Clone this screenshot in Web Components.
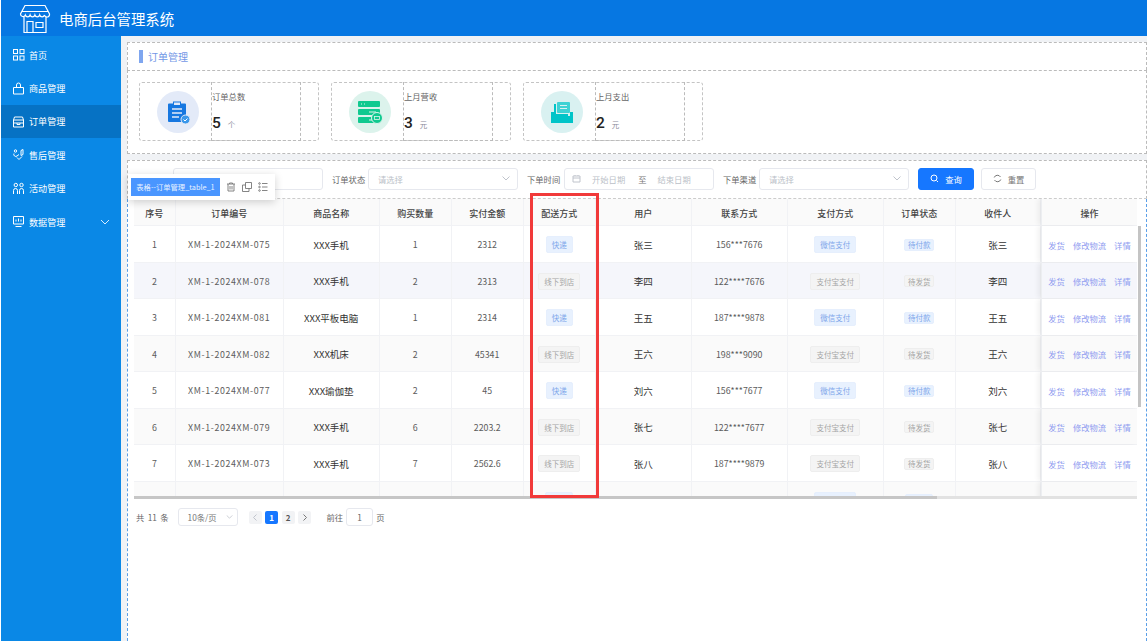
<!DOCTYPE html>
<html lang="zh">
<head>
<meta charset="utf-8">
<title>电商后台管理系统</title>
<style>
  html, body { margin: 0; height: 100%; background: #fff; overflow: hidden; }
  body { padding-left: 1px; box-sizing: border-box; font-family: "Noto Sans CJK SC", "Noto Sans", sans-serif; color: #555; }
</style>
</head>
<body>
<app-shell>
  <side-menu slot="side"></side-menu>
  <title-panel>订单管理</title-panel>
  <stats-panel>
    <stat-card label="订单总数" value="5" unit="个" bg="#e3eaf8">
      <svg slot="icon" width="26" height="26" viewBox="0 0 26 26">
        <path d="M4 4.500h4v-2h8v2h4a1 1 0 0 1 1 1V22a1 1 0 0 1-1 1H4a1 1 0 0 1-1-1V5.500a1 1 0 0 1 1-1z" fill="#1677e0"/>
        <path d="M9 3.500h6v2.500H9z" fill="#e3eaf8"/>
        <path d="M7 10h10M7 14h10M7 18h7" stroke="#e3eaf8" stroke-width="1.500"/>
        <circle cx="20.500" cy="20.500" r="4.500" fill="#3a97ea" stroke="#e3eaf8"/>
        <path d="M18.500 20.500l1.500 1.500 2.500-2.500" stroke="#fff" fill="none"/>
      </svg>
    </stat-card>
    <stat-card label="上月营收" value="3" unit="元" bg="#dcf3ec">
      <svg slot="icon" width="26" height="26" viewBox="0 0 26 26">
        <rect x="1" y="2" width="22" height="6" rx="1" fill="#10c98f"/>
        <rect x="1" y="10" width="22" height="6" rx="1" fill="#10c98f"/>
        <rect x="1" y="18" width="22" height="6" rx="1" fill="#10c98f"/>
        <path d="M4 5h1M7 5h1M12 13h7M12 21h5" stroke="#dcf3ec"/>
        <circle cx="20" cy="19" r="5.500" fill="#10c98f" stroke="#dcf3ec"/>
        <rect x="17.500" y="17.500" width="5" height="3" fill="none" stroke="#dcf3ec" stroke-width=".8"/>
      </svg>
    </stat-card>
    <stat-card label="上月支出" value="2" unit="元" bg="#d9f1f1">
      <svg slot="icon" width="26" height="26" viewBox="0 0 26 26">
        <path d="M2 13h3V5h2v10h12v2H2zM2 17h22v7H2z" fill="#00c4c8"/>
        <path d="M21 13h3v5h-3z" fill="#00c4c8"/>
        <rect x="8" y="3" width="13" height="11" rx="1" fill="#3ed2d4"/>
        <path d="M11 6.500h7M11 9.500h7" stroke="#d9f1f1" stroke-width="1.200"/>
      </svg>
    </stat-card>
  </stats-panel>
  <order-section></order-section>
</app-shell>

<script>
const ICONS = {
  grid: '<rect x="1.500" y="1.500" width="4" height="4"/><rect x="8" y="1.500" width="4" height="4"/><rect x="1.500" y="8" width="4" height="4"/><rect x="8" y="8" width="4" height="4"/>',
  bag: '<path d="M1.500 5.500h10v6.500h-10zM4.500 5.500V3a2 2 0 0 1 4 0v2.500"/>',
  store: '<path d="M2.500 2h8l1 3h-10zM1.500 5V12h10V5M1.500 8h10M5 8v1.500h3V8"/>',
  hands: '<path d="M2 5.500a2 2 0 0 0 3 2.500l2-1.500M5 9.500l2 2 3-3M9 2.500l2-1v5l-2 1z"/><circle cx="3.500" cy="3" r="1.200"/>',
  people: '<circle cx="3.800" cy="3" r="1.700"/><circle cx="9.500" cy="3" r="1.700"/><path d="M1.500 12V8.500a2 2 0 0 1 4 0V12M7.500 12V8.500a2 2 0 0 1 4 0V12"/>',
  monitor: '<path d="M1.500 1.500h10v7.500h-10zM3.500 11.500h6M4 6.500V4.500M6.500 6.500V3.500M9 6.500V4.500"/>'
};

class AppShell extends HTMLElement {
  constructor() {
    super();
    this.attachShadow({ mode: "open" }).innerHTML = `
      <style>
        :host { display: flex; flex-direction: column; height: 641px; }
        header { flex: none; height: 36px; background: #0677e2; display: flex; align-items: center; gap: 8px; padding-left: 18px; color: #fff; font-size: 14.400px; }
        .body { flex: 1; display: flex; min-height: 0; }
        main { flex: 1; min-width: 0; background: #f0f2f5; padding: 6px 0 0 6px; display: flex; flex-direction: column; }
      </style>
      <header>
        <svg width="32" height="32" viewBox="0 0 32 32" fill="none" stroke="#fff" stroke-width="1.200">
          <path d="M6 3.500h20l4.500 8.500a2.500 2.500 0 0 1-5 1 2.500 2.500 0 0 1-4.800 0 2.500 2.500 0 0 1-4.800 0 2.500 2.500 0 0 1-4.800 0 2.500 2.500 0 0 1-4.800 0 2.500 2.500 0 0 1-4.800-1z"/>
          <path d="M3 9.500h26M5 15v15.500h22V15"/>
          <path d="M8 30.500V19.500h6v11M17 20.500h7v5h-7z"/>
        </svg>
        <span>电商后台管理系统</span>
      </header>
      <div class="body">
        <slot name="side"></slot>
        <main><slot></slot></main>
      </div>`;
  }
}

class SideMenu extends HTMLElement {
  constructor() {
    super();
    const items = [["grid", "首页"], ["bag", "商品管理"], ["store", "订单管理", 1], ["hands", "售后管理"], ["people", "活动管理"], ["monitor", "数据管理", 0, 1]];
    this.attachShadow({ mode: "open" }).innerHTML = `
      <style>
        :host { display: block; flex: none; width: 120px; background: #0a88e6; padding-top: 2px; color: #fff; font-size: 9.100px; }
        .item { height: 33.400px; display: flex; align-items: center; gap: 4px; padding-left: 11px; box-sizing: border-box; }
        .on { background: #0672c4; }
        svg.i { width: 13px; height: 13px; fill: none; stroke: #fff; stroke-width: 1; flex: none; }
        .arrow { margin-left: auto; margin-right: 11px; width: 10px; height: 6px; fill: none; stroke: #d6ecff; stroke-width: 1; }
      </style>
      ${items.map(([ic, t, on, more]) => `
        <div class="item ${on ? "on" : ""}">
          <svg class="i" viewBox="0 0 13 13">${ICONS[ic]}</svg><span>${t}</span>
          ${more ? '<svg class="arrow" viewBox="0 0 10 6"><path d="M1 1l4 4 4-4"/></svg>' : ""}
        </div>`).join("")}`;
  }
}

class TitlePanel extends HTMLElement {
  constructor() {
    super();
    this.attachShadow({ mode: "open" }).innerHTML = `
      <style>
        :host { display: flex; flex: none; align-items: center; height: 28px; box-sizing: border-box; background: #fff; border: 1px dashed #bbb; border-bottom: 0; padding: 0 0 1px 11px; color: #7397e6; font-size: 10px; }
        i { width: 4px; height: 13px; background: #7fa6ef; margin-right: 5px; }
      </style>
      <i></i><slot></slot>`;
  }
}

class StatsPanel extends HTMLElement {
  constructor() {
    super();
    this.attachShadow({ mode: "open" }).innerHTML = `
      <style>
        :host { display: flex; flex: none; gap: 12px; height: 84px; box-sizing: border-box; background: #fff; border: 1px dashed #bbb; padding: 11px 0 0 11px; margin-bottom: 6px; }
      </style>
      <slot></slot>`;
  }
}

class StatCard extends HTMLElement {
  constructor() {
    super();
    const a = n => this.getAttribute(n);
    this.attachShadow({ mode: "open" }).innerHTML = `
      <style>
        :host { display: flex; box-sizing: border-box; width: 180px; height: 59px; border: 1px dashed #c4c4c4; border-radius: 3px; padding-left: 17px; }
        .circle { flex: none; width: 42px; height: 42px; align-self: center; border-radius: 50%; background: ${a("bg")}; display: flex; align-items: center; justify-content: center; margin-right: 12px; }
        .box { flex: none; width: 90px; box-sizing: border-box; border: 1px dashed #bbb; border-width: 0 1px 1px 1px; margin-top: -1px; margin-bottom: -1px; padding-top: 8px; }
        .label { font-size: 8.300px; line-height: 12px; color: #666; height: 17px; }
        .val { display: flex; align-items: baseline; gap: 7px; margin-top: 6px; }
        b { font: 500 15.500px/20px Roboto, sans-serif; color: #222; }
        small { font-size: 7.500px; color: #8a8a9a; }
      </style>
      <div class="circle"><slot name="icon"></slot></div>
      <div class="box">
        <div class="label">${a("label")}</div>
        <div class="val"><b>${a("value")}</b><small>${a("unit")}</small></div>
      </div>`;
  }
}

class FilterBar extends HTMLElement {
  constructor() {
    super();
    const chev = '<svg width="8" height="5" viewBox="0 0 8 5" fill="none" stroke="#c0c4cc"><path d="M.5.5L4 4 7.500.5"/></svg>';
    const select = ph => `<div class="ctl"><span class="ph">${ph}</span>${chev}</div>`;
    this.attachShadow({ mode: "open" }).innerHTML = `
      <style>
        :host { display: flex; flex: none; align-items: center; height: 39px; box-sizing: border-box; background: #fff; border: 1px dashed #bbb; border-bottom-color: #ccc; padding: 0 0 2px 45px; font-size: 8.300px; color: #666; }
        .ctl { width: 150px; height: 22px; box-sizing: border-box; border: 1px solid #e6e8ee; border-radius: 3px; display: flex; align-items: center; justify-content: space-between; padding: 0 7px 0 9px; margin-right: 9px; flex: none; }
        .ph { color: #bbbfc8; }
        label { margin-right: 3px; white-space: nowrap; width: 33px; }
        .lt { margin-left: 1px; }
        .date { justify-content: flex-start; padding-left: 7px; }
        .date .ph:nth-of-type(1) { margin-left: 11px; }
        .date em { font-style: normal; margin: 0 11px 0 13px; color: #777; }
        button { font: inherit; height: 22px; box-sizing: border-box; border-radius: 3px; display: flex; align-items: center; justify-content: center; gap: 6px; padding: 0; }
        .go { width: 56px; background: #1677ff; border: 1px solid #1677ff; color: #fff; margin-right: 7px; }
        .re { width: 55px; background: #fff; border: 1px solid #e6e8ee; color: #777; }
      </style>
      <div class="ctl"></div>
      <label>订单状态</label>${select("请选择")}
      <label>下单时间</label>
      <div class="ctl date lt">
        <svg width="9" height="9" viewBox="0 0 9 9" fill="none" stroke="#c0c4cc"><path d="M1 2h7v6H1zM1 4h7M3 1v1M6 1v1"/></svg>
        <span class="ph">开始日期</span><em>至</em><span class="ph">结束日期</span>
      </div>
      <label>下单渠道</label>${select("请选择")}
      <button class="go"><svg width="9" height="9" viewBox="0 0 9 9" fill="none" stroke="#fff"><circle cx="4" cy="4" r="3"/><path d="M6.500 6.500L8 8"/></svg>查询</button>
      <button class="re"><svg width="9" height="9" viewBox="0 0 9 9" fill="none" stroke="#777"><path d="M7.500 3A3.500 3.500 0 0 0 1.200 3.500M1.500 6a3.500 3.500 0 0 0 6.300-.500"/></svg>重置</button>`;
  }
}

class StatusTag extends HTMLElement {
  constructor() {
    super();
    this.attachShadow({ mode: "open" }).innerHTML = `
      <style>
        :host { display: inline-flex; align-items: center; justify-content: center; box-sizing: border-box; height: 17px; padding: 0 5px; border-radius: 2px; font-size: 7.500px; border: 1px solid #e6effd; background: #e8f1fe; color: #7ea6ea; }
        :host([gray]) { border-color: #eeeeee; background: #f4f4f4; color: #a5a5a5; }
        :host([small]) { height: 12px; padding: 0 3px; }
        :host([wide]) { width: 42px; }
        :host([size="wide"]) { width: 28px; padding: 0; }
      </style>
      <slot></slot>`;
  }
}

class OrderTable extends HTMLElement {
  constructor() {
    super();
    const head = ["序号", "订单编号", "商品名称", "购买数量", "实付金额", "配送方式", "用户", "联系方式", "支付方式", "订单状态", "收件人", "操作"];
    const rows = [
      [1, "075", "XXX手机", 1, "2312", "张三", "156***7676"],
      [2, "078", "XXX手机", 2, "2313", "李四", "122****7676"],
      [3, "081", "XXX平板电脑", 1, "2314", "王五", "187****9878"],
      [4, "082", "XXX机床", 2, "45341", "王六", "198***9090"],
      [5, "077", "XXX瑜伽垫", 2, "45", "刘六", "156***7677"],
      [6, "079", "XXX手机", 6, "2203.2", "张七", "122****7677"],
      [7, "073", "XXX手机", 7, "2562.6", "张八", "187****9879"]
    ];
    const fast = [1, 3, 5];
    const rowHtml = r => {
      const blue = fast.includes(r[0]);
      const g = blue ? "" : "gray";
      return `<div class="row">
        <div>${r[0]}</div><div class="no">XM-1-2024XM-${r[1]}</div><div class="d">${r[2]}</div><div>${r[3]}</div><div>${r[4]}</div>
        <div><status-tag ${g}>${blue ? "快递" : "线下到店"}</status-tag></div>
        <div class="d">${r[5]}</div><div>${r[6]}</div>
        <div><status-tag ${g}>${blue ? "微信支付" : "支付宝支付"}</status-tag></div>
        <div><status-tag ${g} small>${blue ? "待付款" : "待发货"}</status-tag></div>
        <div class="d">${r[5]}</div>
        <div class="op"><a>发货</a><a>修改物流</a><a>详情</a></div>
      </div>`;
    };
    this.attachShadow({ mode: "open" }).innerHTML = `
      <style>
        :host { display: block; flex: 1; box-sizing: border-box; background: #fff; border: 1px dashed #5a9fe8; border-width: 0 1px; padding-left: 6px; font-size: 8.800px; color: #5c5c5c; }
        .wrap { display: grid; grid-template-columns: 1003px 4px; }
        .view { height: 297px; overflow: hidden; }
        .row { --bg: #fff; background: var(--bg); display: grid; grid-template-columns: 41.700px 108px 96px 72px 72px 72px 96px 96px 96px 72px 85.300px 96px; height: 36.500px; box-sizing: border-box; border-bottom: 1px solid #f1f2f5; }
        .row > div { display: flex; align-items: center; justify-content: center; border-right: 1px solid #f1f2f5; min-width: 0; white-space: nowrap; padding-top: 1.500px; box-sizing: border-box; }
        .row:nth-child(3) { --bg: #f5f6fb; }
        .row:nth-child(5), .row:nth-child(7), .row:nth-child(9) { --bg: #fafafa; }
        .row.head { --bg: #fafafa; height: 27px; color: #444; font-weight: 500; font-size: 9px; }
        .row.head > div { padding-top: 3px; }
        .no { letter-spacing: .65px; }
        .d { color: #333; font-size: 9.500px; }
        .row > .op, .row.head > div:last-child { background: var(--bg); border-left: 1px solid #eceef1; border-right: 0; box-shadow: -3px 0 5px rgba(0,0,0,.06); clip-path: inset(0 0 -1px -8px); position: relative; }
        .row > .op { gap: 8px; font-size: 8.300px; color: #8f9cf0; }
        .bar { padding-top: 27px; }
        .bar i { display: block; width: 3px; height: 181px; margin-left: 1px; background: #c4c4c4; }
        .hbar { width: 1003px; height: 3px; background: #e2e2e2; }
        .hbar i { display: block; width: 803px; height: 3px; background: #c6c6c6; }
      </style>
      <div class="wrap">
        <div class="view">
          <div class="row head">${head.map(h => `<div>${h}</div>`).join("")}</div>
          ${rows.map(rowHtml).join("")}
          <div class="row">
            <div></div><div></div><div></div><div></div><div></div>
            <div><status-tag size="wide"></status-tag></div><div></div><div></div>
            <div><status-tag wide></status-tag></div>
            <div><status-tag size="wide" small></status-tag></div><div></div><div class="op"></div>
          </div>
        </div>
        <div class="bar"><i></i></div>
      </div>
      <div class="hbar"><i></i></div>
      <slot></slot>`;
  }
}

class TablePager extends HTMLElement {
  constructor() {
    super();
    this.attachShadow({ mode: "open" }).innerHTML = `
      <style>
        :host { display: flex; align-items: center; height: 18px; margin: 9px 0 0 2px; font-size: 8.300px; color: #666; }
        .total { word-spacing: 1.500px; white-space: nowrap; }
        .size, .jump { box-sizing: border-box; height: 18px; border: 1px solid #e6e8ee; border-radius: 3px; display: flex; align-items: center; justify-content: center; }
        .size { width: 60px; margin: 0 11px 0 9px; justify-content: space-between; padding: 0 4px 0 9px; color: #777; }
        .p { box-sizing: border-box; width: 13px; height: 13px; margin-right: 3.500px; border-radius: 2px; background: #f2f3f5; display: flex; align-items: center; justify-content: center; font-weight: 700; font-size: 8px; color: #555; }
        .p.on { background: #1677ff; color: #fff; }
        .jump { width: 27px; margin: 0 3px; }
        .to { margin-left: 12px; }
      </style>
      <span class="total">共 11 条</span>
      <div class="size">10条/页<svg width="7" height="4" viewBox="0 0 8 5" fill="none" stroke="#c0c4cc"><path d="M.5.5L4 4 7.500.5"/></svg></div>
      <div class="p"><svg width="4" height="7" viewBox="0 0 4 7" fill="none" stroke="#c0c4cc"><path d="M3.500.5L.5 3.500l3 3"/></svg></div>
      <div class="p on">1</div>
      <div class="p">2</div>
      <div class="p"><svg width="4" height="7" viewBox="0 0 4 7" fill="none" stroke="#777"><path d="M.5.5l3 3-3 3"/></svg></div>
      <span class="to">前往</span><div class="jump">1</div><span>页</span>`;
  }
}

class OrderSection extends HTMLElement {
  constructor() {
    super();
    this.attachShadow({ mode: "open" }).innerHTML = `
      <style>
        :host { display: flex; flex-direction: column; flex: 1; min-height: 0; position: relative; }
        .tools { position: absolute; left: 1px; top: 14px; width: 147px; height: 26px; background: #fff; box-shadow: 0 2px 8px rgba(0,0,0,.18); display: flex; align-items: center; padding-left: 3px; box-sizing: border-box; gap: 6px; }
        .name { width: 89px; height: 18px; background: #4a96ff; color: #e8f2ff; font-size: 7.300px; display: flex; align-items: center; justify-content: center; white-space: nowrap; }
        .tools svg { flex: none; }
        .mark { position: absolute; left: 403px; top: 33px; width: 69px; height: 305px; box-sizing: border-box; border: 3px solid #f13a3a; }
      </style>
      <filter-bar></filter-bar>
      <order-table><table-pager></table-pager></order-table>
      <div class="tools">
        <span class="name">表格--订单管理_table_1</span>
        <svg width="10" height="10" viewBox="0 0 10 10" fill="none" stroke="#777" stroke-width=".9"><path d="M1 2h8M3.500 2V1h3v1M2 2v7h6V2M4 4v3.500M6 4v3.500"/></svg>
        <svg width="10" height="10" viewBox="0 0 10 10" fill="none" stroke="#777" stroke-width=".9"><path d="M3.500.5h6v6h-6zM3.500 3H.5v6.500h6.500V6.500"/></svg>
        <svg width="10" height="10" viewBox="0 0 10 10" fill="none" stroke="#777" stroke-width=".9"><path d="M4 1.500h5.500M4 5h5.500M4 8.500h5.500"/><circle cx="1.500" cy="1.500" r=".8"/><circle cx="1.500" cy="5" r=".8"/><circle cx="1.500" cy="8.500" r=".8"/></svg>
      </div>
      <div class="mark"></div>`;
  }
}

customElements.define("app-shell", AppShell);
customElements.define("side-menu", SideMenu);
customElements.define("title-panel", TitlePanel);
customElements.define("stats-panel", StatsPanel);
customElements.define("stat-card", StatCard);
customElements.define("filter-bar", FilterBar);
customElements.define("status-tag", StatusTag);
customElements.define("order-table", OrderTable);
customElements.define("table-pager", TablePager);
customElements.define("order-section", OrderSection);
</script>
</body>
</html>
